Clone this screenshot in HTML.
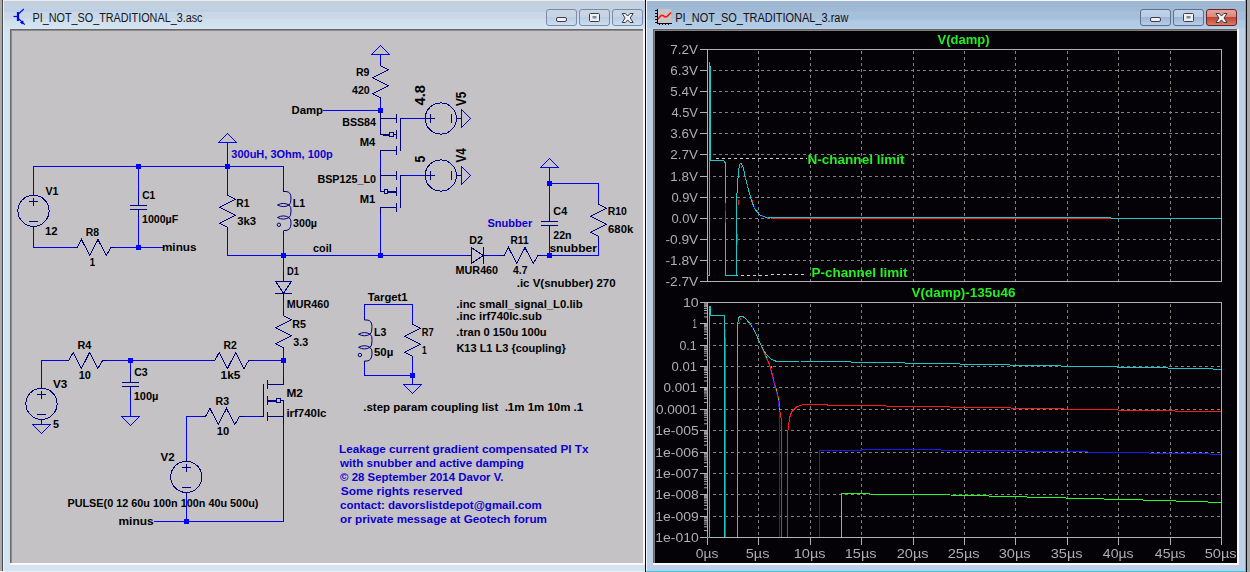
<!DOCTYPE html>
<html><head><meta charset="utf-8">
<style>
html,body{margin:0;padding:0;background:#a9a9a9;width:1250px;height:572px;overflow:hidden}
svg{display:block;position:absolute;left:0;top:0}
.t{font-family:"Liberation Sans",sans-serif}
</style></head><body>
<svg width="1250" height="572" viewBox="0 0 1250 572" shape-rendering="crispEdges">
<defs>
<linearGradient id="tbL" x1="0" y1="0" x2="0" y2="1">
<stop offset="0" stop-color="#c0cfdb"/><stop offset="0.25" stop-color="#c3d2de"/><stop offset="0.3" stop-color="#bcd0ea"/><stop offset="0.38" stop-color="#bcd0ea"/><stop offset="0.4" stop-color="#cad8e6"/><stop offset="0.62" stop-color="#cad8e6"/><stop offset="0.66" stop-color="#cfdeea"/><stop offset="0.88" stop-color="#d2e2ef"/><stop offset="1" stop-color="#d5e5f2"/>
</linearGradient>
<linearGradient id="tbR" x1="0" y1="0" x2="0" y2="1">
<stop offset="0" stop-color="#9db6d2"/><stop offset="0.35" stop-color="#a0b9d5"/><stop offset="0.4" stop-color="#a6c0da"/><stop offset="0.62" stop-color="#a6c0da"/><stop offset="0.66" stop-color="#a9c4e0"/><stop offset="0.72" stop-color="#b2cbe4"/><stop offset="0.92" stop-color="#b2cbe4"/><stop offset="1" stop-color="#bcd3ec"/>
</linearGradient>
<linearGradient id="btnL" x1="0" y1="0" x2="0" y2="1">
<stop offset="0" stop-color="#c9d6e4"/><stop offset="0.45" stop-color="#c6d4e4"/><stop offset="0.5" stop-color="#b8cce4"/><stop offset="1" stop-color="#cddff0"/>
</linearGradient>
<linearGradient id="btnR" x1="0" y1="0" x2="0" y2="1">
<stop offset="0" stop-color="#c0d3e9"/><stop offset="0.45" stop-color="#b9cde5"/><stop offset="0.5" stop-color="#9fb7d4"/><stop offset="1" stop-color="#b8d0ea"/>
</linearGradient>
<linearGradient id="btnX" x1="0" y1="0" x2="0" y2="1">
<stop offset="0" stop-color="#e8a49a"/><stop offset="0.45" stop-color="#d98a7c"/><stop offset="0.5" stop-color="#c34330"/><stop offset="1" stop-color="#d9806a"/>
</linearGradient>
</defs>

<!-- ===== LEFT WINDOW FRAME ===== -->
<g id="leftwin">
<rect x="0" y="0" width="646" height="572" fill="#aaaaaa"/>
<rect x="2" y="0" width="644" height="571" fill="#4a4a4a"/>
<rect x="3" y="0" width="643" height="571" fill="#e9f0f8"/>
<rect x="4" y="1" width="642" height="28" fill="url(#tbL)"/>
<rect x="4" y="29" width="642" height="542" fill="#d3e3f2"/>
<rect x="3" y="0" width="643" height="1" fill="#e8ecef"/>
<rect x="0" y="571" width="646" height="1" fill="#eeeeee"/>
<!-- sunken client -->
<rect x="10" y="29" width="635" height="536" fill="#f8f8f8"/>
<rect x="10" y="29" width="633" height="534" fill="#6a6a6a"/>
<rect x="11" y="30" width="632" height="533" fill="#8a8a8a"/>
<rect x="12" y="31" width="631" height="532" fill="#c4c2c4"/>
</g>

<!-- ===== RIGHT WINDOW FRAME ===== -->
<g id="rightwin">
<rect x="645" y="0" width="602" height="572" fill="#0a0a0a"/>
<rect x="1247" y="0" width="3" height="572" fill="#a9a9a9"/>
<rect x="1245" y="0" width="1" height="572" fill="#35c8e8"/>
<rect x="646" y="0" width="599" height="571" fill="#f4f6f8"/>
<rect x="647" y="1" width="598" height="28" fill="url(#tbR)"/>
<rect x="647" y="29" width="598" height="542" fill="#bcd1e8"/>
<rect x="646" y="571" width="600" height="1" fill="#35c8e8"/>
<rect x="653" y="29" width="586" height="536" fill="#f8f8f8"/>
<rect x="653" y="29" width="584" height="534" fill="#6a6060"/>
<rect x="654" y="30" width="583" height="533" fill="#808080"/>
<rect x="655" y="31" width="582" height="532" fill="#040206"/>
</g>


<!-- ===== TITLE BAR CONTENTS ===== -->
<g id="titles">
<!-- left icon: transistor -->
<g stroke="#0000ff" fill="none" shape-rendering="geometricPrecision">
<line x1="13.5" y1="16.5" x2="17" y2="16.5" stroke-width="1.2"/>
<line x1="18" y1="12" x2="18" y2="21" stroke-width="2.2"/>
<line x1="19" y1="13.5" x2="23.8" y2="9" stroke-width="1.1"/>
<line x1="19" y1="19" x2="24.8" y2="24.6" stroke-width="1.1"/>
<path d="M20.5 22.5 L23 21 L22.5 23.8 Z" fill="#0000ff" stroke-width="1"/>
</g>
<text class="t" x="32.5" y="22" font-size="12" fill="#151520" textLength="170" lengthAdjust="spacingAndGlyphs">PI_NOT_SO_TRADITIONAL_3.asc</text>
<!-- right icon: plot -->
<rect x="657" y="9" width="14" height="14" fill="#c8c4c8"/>
<rect x="657" y="9" width="1" height="15" fill="#000"/>
<rect x="657" y="23" width="15" height="1" fill="#000"/>
<g fill="#000"><rect x="655" y="10" width="2" height="1"/><rect x="655" y="13" width="2" height="1"/><rect x="655" y="16" width="2" height="1"/><rect x="655" y="19" width="2" height="1"/><rect x="655" y="22" width="2" height="1"/>
<rect x="659" y="24" width="1" height="1"/><rect x="662" y="24" width="1" height="1"/><rect x="665" y="24" width="1" height="1"/><rect x="668" y="24" width="1" height="1"/></g>
<polyline points="658,19 661,15.5 663,15.5 665,17 667,16.5 671,12.5" stroke="#ff1010" stroke-width="1.6" fill="none" shape-rendering="geometricPrecision"/>
<text class="t" x="675.3" y="22" font-size="12" fill="#101018" textLength="173" lengthAdjust="spacingAndGlyphs">PI_NOT_SO_TRADITIONAL_3.raw</text>

<!-- left window buttons (inactive) -->
<g shape-rendering="geometricPrecision">
<rect x="546.5" y="9.5" width="30" height="16" rx="2.5" fill="url(#btnL)" stroke="#7e89a8"/>
<rect x="579.5" y="9.5" width="30" height="16" rx="2.5" fill="url(#btnL)" stroke="#7e89a8"/>
<rect x="612.5" y="9.5" width="30" height="16" rx="2.5" fill="url(#btnL)" stroke="#7e89a8"/>
<rect x="556.5" y="17.5" width="10" height="4" rx="1.5" fill="#f0f0f0" stroke="#3c3c4c"/>
<rect x="589.5" y="13.5" width="10" height="8" rx="1" fill="#f0f0f0" stroke="#3c3c4c"/>
<rect x="592.5" y="16" width="4" height="2.5" fill="#7a8aa0" stroke="none"/>
<path d="M622.20 13.50 L625.40 13.50 L627.70 16.05 L630.00 13.50 L633.20 13.50 L630.25 18.00 L633.20 22.50 L630.00 22.50 L627.70 19.95 L625.40 22.50 L622.20 22.50 L625.15 18.00 Z" fill="#f4f4f4" stroke="#383848" stroke-width="1" stroke-linejoin="round"/>
<!-- right window buttons (active) -->
<rect x="1140.5" y="9.5" width="30" height="16" rx="2.5" fill="url(#btnR)" stroke="#5c6f8c"/>
<rect x="1173.5" y="9.5" width="30" height="16" rx="2.5" fill="url(#btnR)" stroke="#5c6f8c"/>
<rect x="1206.5" y="9.5" width="30" height="16" rx="2.5" fill="url(#btnX)" stroke="#6a2228"/>
<rect x="1150.5" y="17.5" width="10" height="4" rx="1.5" fill="#f0f0f0" stroke="#3c3c4c"/>
<rect x="1183.5" y="13.5" width="10" height="8" rx="1" fill="#f0f0f0" stroke="#3c3c4c"/>
<rect x="1186.5" y="16" width="4" height="2.5" fill="#7a8aa0" stroke="none"/>
<path d="M1216.00 13.50 L1219.20 13.50 L1221.50 16.05 L1223.80 13.50 L1227.00 13.50 L1224.05 18.00 L1227.00 22.50 L1223.80 22.50 L1221.50 19.95 L1219.20 22.50 L1216.00 22.50 L1218.95 18.00 Z" fill="#f4f4f4" stroke="#383848" stroke-width="1" stroke-linejoin="round"/>
</g>
</g>

<g id="schematic" shape-rendering="crispEdges">
<polyline points="33.50,192.00 33.50,166.50 283.50,166.50 283.50,188.00" stroke="#0000ff" stroke-width="1" fill="none"/>
<rect x="136.0" y="164.0" width="5" height="5" fill="#0000ff"/>
<rect x="225.0" y="164.0" width="5" height="5" fill="#0000ff"/>
<circle cx="33.5" cy="210.8" r="15.6" stroke="#000080" fill="none" stroke-width="1"/>
<line x1="29.0" y1="201.5" x2="38.0" y2="201.5" stroke="#000080" stroke-width="1"/>
<line x1="33.5" y1="197.70000000000002" x2="33.5" y2="205.70000000000002" stroke="#000080" stroke-width="1"/>
<line x1="29.0" y1="221.5" x2="38.0" y2="221.5" stroke="#000080" stroke-width="1"/>
<line x1="33.5" y1="192" x2="33.5" y2="195.2" stroke="#000080" stroke-width="1"/>
<line x1="33.5" y1="226.4" x2="33.5" y2="230" stroke="#000080" stroke-width="1"/>
<polyline points="33.50,230.00 33.50,247.50 73.00,247.50" stroke="#0000ff" stroke-width="1" fill="none"/>
<line x1="73" y1="247.5" x2="77" y2="247.5" stroke="#000080" stroke-width="1"/>
<polyline points="77.00,247.50 81.50,239.50 89.75,255.50 98.00,239.50 106.25,255.50 111.00,247.50" stroke="#000080" stroke-width="1" fill="none"/>
<line x1="111" y1="247.5" x2="115" y2="247.5" stroke="#000080" stroke-width="1"/>
<polyline points="115.00,247.50 162.50,247.50" stroke="#0000ff" stroke-width="1" fill="none"/>
<rect x="136.0" y="245.0" width="5" height="5" fill="#0000ff"/>
<polyline points="138.50,166.50 138.50,197.00" stroke="#0000ff" stroke-width="1" fill="none"/>
<line x1="138.5" y1="197" x2="138.5" y2="205.5" stroke="#000080" stroke-width="1"/>
<line x1="130.0" y1="205.5" x2="147.0" y2="205.5" stroke="#000080" stroke-width="1"/>
<line x1="130.0" y1="209.5" x2="147.0" y2="209.5" stroke="#000080" stroke-width="1"/>
<line x1="138.5" y1="209.5" x2="138.5" y2="217" stroke="#000080" stroke-width="1"/>
<polyline points="138.50,217.00 138.50,247.50" stroke="#0000ff" stroke-width="1" fill="none"/>
<polygon points="218.50,142.50 236.50,142.50 227.50,133.50" stroke="#0000ff" stroke-width="1" fill="none"/>
<polyline points="227.50,142.50 227.50,166.50" stroke="#0000ff" stroke-width="1" fill="none"/>
<polyline points="227.50,166.50 227.50,191.50" stroke="#0000ff" stroke-width="1" fill="none"/>
<line x1="227.5" y1="191.5" x2="227.5" y2="195.2" stroke="#000080" stroke-width="1"/>
<polyline points="227.50,195.20 235.50,199.20 219.50,207.20 235.50,215.20 219.50,223.20 227.50,227.20" stroke="#000080" stroke-width="1" fill="none"/>
<line x1="227.5" y1="227.2" x2="227.5" y2="230.5" stroke="#000080" stroke-width="1"/>
<polyline points="227.50,230.50 227.50,255.50 380.50,255.50" stroke="#0000ff" stroke-width="1" fill="none"/>
<line x1="283.5" y1="188" x2="283.5" y2="191.5" stroke="#000080" stroke-width="1"/>
<path d="M283.5 191.5 H286.0 Q291.0 191.8 291.0 198.0 Q291.0 204.0 289.0 205.0 Q291.5 206.5 291.0 211.0 Q291.0 216.5 289.0 217.5 Q291.5 219.0 291.0 224.0 Q290.5 230.2 286.0 230.5 H283.5" stroke="#000080" fill="none" stroke-width="1" shape-rendering="geometricPrecision"/>
<path d="M289.0 205.0 Q283.5 201.8 277.5 205.0 Q283.5 208.2 289.0 205.0" stroke="#000080" fill="none" stroke-width="1" shape-rendering="geometricPrecision"/>
<path d="M289.0 217.5 Q283.5 214.3 277.5 217.5 Q283.5 220.7 289.0 217.5" stroke="#000080" fill="none" stroke-width="1" shape-rendering="geometricPrecision"/>
<circle cx="278.9" cy="224.8" r="1.7" stroke="#000080" fill="none" stroke-width="1" shape-rendering="geometricPrecision"/>
<line x1="283.5" y1="230.5" x2="283.5" y2="234" stroke="#000080" stroke-width="1"/>
<polyline points="283.50,234.00 283.50,255.50" stroke="#0000ff" stroke-width="1" fill="none"/>
<rect x="281.0" y="253.0" width="5" height="5" fill="#0000ff"/>
<polyline points="283.50,255.50 467.00,255.50" stroke="#0000ff" stroke-width="1" fill="none"/>
<line x1="467" y1="255.5" x2="471.5" y2="255.5" stroke="#000080" stroke-width="1"/>
<rect x="378.0" y="253.0" width="5" height="5" fill="#0000ff"/>
<polygon points="371.50,54.50 389.50,54.50 380.50,45.50" stroke="#0000ff" stroke-width="1" fill="none"/>
<polyline points="380.50,54.50 380.50,61.50" stroke="#0000ff" stroke-width="1" fill="none"/>
<line x1="380.5" y1="61.5" x2="380.5" y2="65.6" stroke="#000080" stroke-width="1"/>
<polyline points="380.50,65.60 388.50,69.60 372.50,77.60 388.50,85.60 372.50,93.60 380.50,97.60" stroke="#000080" stroke-width="1" fill="none"/>
<line x1="380.5" y1="97.6" x2="380.5" y2="101" stroke="#000080" stroke-width="1"/>
<polyline points="380.50,101.00 380.50,110.50" stroke="#0000ff" stroke-width="1" fill="none"/>
<polyline points="322.50,110.50 380.50,110.50" stroke="#0000ff" stroke-width="1" fill="none"/>
<rect x="378.0" y="108.0" width="5" height="5" fill="#0000ff"/>
<polyline points="380.50,112.00 380.50,118.50 396.50,118.50" stroke="#000080" stroke-width="1" fill="none"/>
<line x1="396.5" y1="114" x2="396.5" y2="123" stroke="#000080" stroke-width="1"/>
<line x1="396.5" y1="130" x2="396.5" y2="139" stroke="#000080" stroke-width="1"/>
<line x1="396.5" y1="146" x2="396.5" y2="155" stroke="#000080" stroke-width="1"/>
<polyline points="396.50,150.50 380.50,150.50 380.50,157.00" stroke="#000080" stroke-width="1" fill="none"/>
<polyline points="380.50,118.50 380.50,134.50 383.50,134.50" stroke="#000080" stroke-width="1" fill="none"/>
<path d="M383.5 134 H389.5 V132 H393 V136.5 H389.5 V135 H383.5 Z" stroke="#000080" fill="none"/>
<line x1="393" y1="134.5" x2="396.5" y2="134.5" stroke="#000080" stroke-width="1"/>
<polyline points="400.50,150.50 400.50,118.50 404.00,118.50" stroke="#000080" stroke-width="1" fill="none"/>
<polyline points="380.50,169.00 380.50,175.50 396.50,175.50" stroke="#000080" stroke-width="1" fill="none"/>
<line x1="396.5" y1="171" x2="396.5" y2="180" stroke="#000080" stroke-width="1"/>
<line x1="396.5" y1="187" x2="396.5" y2="196" stroke="#000080" stroke-width="1"/>
<line x1="396.5" y1="203" x2="396.5" y2="212" stroke="#000080" stroke-width="1"/>
<polyline points="396.50,207.50 380.50,207.50 380.50,214.00" stroke="#000080" stroke-width="1" fill="none"/>
<polyline points="380.50,175.50 380.50,191.50 383.50,191.50" stroke="#000080" stroke-width="1" fill="none"/>
<path d="M387.5 189 H384 V193.5 H387.5 V192 H396 V191 H387.5 Z" stroke="#000080" fill="none"/>
<polyline points="400.50,207.50 400.50,175.50 404.00,175.50" stroke="#000080" stroke-width="1" fill="none"/>
<polyline points="380.50,157.00 380.50,169.00" stroke="#0000ff" stroke-width="1" fill="none"/>
<polyline points="380.50,214.00 380.50,255.50" stroke="#0000ff" stroke-width="1" fill="none"/>
<polyline points="404.00,118.50 424.90,118.50" stroke="#0000ff" stroke-width="1" fill="none"/>
<circle cx="440.8" cy="118.5" r="15.6" stroke="#000080" fill="none" stroke-width="1"/>
<line x1="426.3" y1="118.5" x2="435.3" y2="118.5" stroke="#000080" stroke-width="1"/>
<line x1="430.5" y1="114.0" x2="430.5" y2="123.0" stroke="#000080" stroke-width="1"/>
<line x1="451.5" y1="114.0" x2="451.5" y2="123.0" stroke="#000080" stroke-width="1"/>
<line x1="456.1" y1="118.5" x2="461.5" y2="118.5" stroke="#000080" stroke-width="1"/>
<polygon points="461.50,109.50 461.50,127.50 470.50,118.50" stroke="#0000ff" stroke-width="1" fill="none"/>
<polyline points="404.00,175.50 424.90,175.50" stroke="#0000ff" stroke-width="1" fill="none"/>
<circle cx="440.8" cy="175.5" r="15.6" stroke="#000080" fill="none" stroke-width="1"/>
<line x1="426.3" y1="175.5" x2="435.3" y2="175.5" stroke="#000080" stroke-width="1"/>
<line x1="430.5" y1="171.0" x2="430.5" y2="180.0" stroke="#000080" stroke-width="1"/>
<line x1="451.5" y1="171.0" x2="451.5" y2="180.0" stroke="#000080" stroke-width="1"/>
<line x1="456.1" y1="175.5" x2="461.5" y2="175.5" stroke="#000080" stroke-width="1"/>
<polygon points="461.50,166.50 461.50,184.50 470.50,175.50" stroke="#0000ff" stroke-width="1" fill="none"/>
<polygon points="471.30,247.50 471.30,263.50 483.30,255.50" stroke="#000080" stroke-width="1" fill="none"/>
<line x1="483.5" y1="247.0" x2="483.5" y2="264.0" stroke="#000080" stroke-width="1"/>
<line x1="483.3" y1="255.5" x2="487" y2="255.5" stroke="#000080" stroke-width="1"/>
<polyline points="487.00,255.50 500.00,255.50" stroke="#0000ff" stroke-width="1" fill="none"/>
<line x1="500" y1="255.5" x2="504" y2="255.5" stroke="#000080" stroke-width="1"/>
<polyline points="504.00,255.50 508.50,247.50 516.75,263.50 525.00,247.50 533.25,263.50 538.00,255.50" stroke="#000080" stroke-width="1" fill="none"/>
<line x1="538" y1="255.5" x2="542" y2="255.5" stroke="#000080" stroke-width="1"/>
<polyline points="542.00,255.50 598.50,255.50" stroke="#0000ff" stroke-width="1" fill="none"/>
<rect x="547.0" y="253.0" width="5" height="5" fill="#0000ff"/>
<polygon points="540.50,167.50 558.50,167.50 549.50,158.50" stroke="#0000ff" stroke-width="1" fill="none"/>
<polyline points="549.50,167.50 549.50,183.50 598.50,183.50 598.50,200.00" stroke="#0000ff" stroke-width="1" fill="none"/>
<rect x="547.0" y="181.0" width="5" height="5" fill="#0000ff"/>
<polyline points="549.50,183.50 549.50,213.00" stroke="#0000ff" stroke-width="1" fill="none"/>
<line x1="549.5" y1="213" x2="549.5" y2="221" stroke="#000080" stroke-width="1"/>
<line x1="541.0" y1="221.5" x2="558.0" y2="221.5" stroke="#000080" stroke-width="1"/>
<line x1="541.0" y1="225.5" x2="558.0" y2="225.5" stroke="#000080" stroke-width="1"/>
<line x1="549.5" y1="225" x2="549.5" y2="233" stroke="#000080" stroke-width="1"/>
<polyline points="549.50,233.00 549.50,255.50" stroke="#0000ff" stroke-width="1" fill="none"/>
<line x1="598.5" y1="200" x2="598.5" y2="204.3" stroke="#000080" stroke-width="1"/>
<polyline points="598.50,204.30 606.50,208.30 590.50,216.30 606.50,224.30 590.50,232.30 598.50,236.30" stroke="#000080" stroke-width="1" fill="none"/>
<line x1="598.5" y1="236.3" x2="598.5" y2="240" stroke="#000080" stroke-width="1"/>
<polyline points="598.50,240.00 598.50,255.50" stroke="#0000ff" stroke-width="1" fill="none"/>
<polyline points="283.50,255.50 283.50,272.00" stroke="#0000ff" stroke-width="1" fill="none"/>
<line x1="283.5" y1="272" x2="283.5" y2="281.2" stroke="#000080" stroke-width="1"/>
<polygon points="275.50,281.20 291.50,281.20 283.50,293.20" stroke="#000080" stroke-width="1" fill="none"/>
<line x1="275.0" y1="293.5" x2="292.0" y2="293.5" stroke="#000080" stroke-width="1"/>
<line x1="283.5" y1="293.2" x2="283.5" y2="301" stroke="#000080" stroke-width="1"/>
<polyline points="283.50,301.00 283.50,312.00" stroke="#0000ff" stroke-width="1" fill="none"/>
<line x1="283.5" y1="312" x2="283.5" y2="315.9" stroke="#000080" stroke-width="1"/>
<polyline points="283.50,315.90 291.50,319.90 275.50,327.90 291.50,335.90 275.50,343.90 283.50,347.90" stroke="#000080" stroke-width="1" fill="none"/>
<line x1="283.5" y1="347.9" x2="283.5" y2="351" stroke="#000080" stroke-width="1"/>
<polyline points="283.50,351.00 283.50,377.00" stroke="#0000ff" stroke-width="1" fill="none"/>
<rect x="281.0" y="358.0" width="5" height="5" fill="#0000ff"/>
<polyline points="283.50,377.00 283.50,384.50 267.50,384.50" stroke="#000080" stroke-width="1" fill="none"/>
<line x1="267.5" y1="380" x2="267.5" y2="389" stroke="#000080" stroke-width="1"/>
<line x1="267.5" y1="396" x2="267.5" y2="405" stroke="#000080" stroke-width="1"/>
<line x1="267.5" y1="412" x2="267.5" y2="421" stroke="#000080" stroke-width="1"/>
<polyline points="267.50,416.50 283.50,416.50 283.50,424.00" stroke="#000080" stroke-width="1" fill="none"/>
<path d="M268 400 H276.5 V398.5 H280.5 V402.5 H276.5 V401 H268 Z" stroke="#000080" fill="none"/>
<polyline points="280.50,400.50 283.50,400.50 283.50,416.50" stroke="#000080" stroke-width="1" fill="none"/>
<polyline points="260.00,416.50 263.50,416.50 263.50,384.00" stroke="#000080" stroke-width="1" fill="none"/>
<polyline points="243.50,416.50 260.00,416.50" stroke="#0000ff" stroke-width="1" fill="none"/>
<polyline points="283.50,424.00 283.50,521.50 154.00,521.50" stroke="#0000ff" stroke-width="1" fill="none"/>
<rect x="184.0" y="519.0" width="5" height="5" fill="#0000ff"/>
<polyline points="41.50,384.00 41.50,360.50 64.50,360.50" stroke="#0000ff" stroke-width="1" fill="none"/>
<line x1="64.5" y1="360.5" x2="68.6" y2="360.5" stroke="#000080" stroke-width="1"/>
<polyline points="68.60,360.50 73.10,352.50 81.35,368.50 89.60,352.50 97.85,368.50 102.60,360.50" stroke="#000080" stroke-width="1" fill="none"/>
<line x1="102.6" y1="360.5" x2="106.5" y2="360.5" stroke="#000080" stroke-width="1"/>
<polyline points="106.50,360.50 210.50,360.50" stroke="#0000ff" stroke-width="1" fill="none"/>
<line x1="210.5" y1="360.5" x2="214.7" y2="360.5" stroke="#000080" stroke-width="1"/>
<polyline points="214.70,360.50 219.20,352.50 227.45,368.50 235.70,352.50 243.95,368.50 248.70,360.50" stroke="#000080" stroke-width="1" fill="none"/>
<line x1="248.7" y1="360.5" x2="252.5" y2="360.5" stroke="#000080" stroke-width="1"/>
<polyline points="252.50,360.50 283.50,360.50" stroke="#0000ff" stroke-width="1" fill="none"/>
<rect x="128.0" y="358.0" width="5" height="5" fill="#0000ff"/>
<polyline points="130.50,360.50 130.50,374.00" stroke="#0000ff" stroke-width="1" fill="none"/>
<line x1="130.5" y1="374" x2="130.5" y2="382.7" stroke="#000080" stroke-width="1"/>
<line x1="122.0" y1="382.5" x2="139.0" y2="382.5" stroke="#000080" stroke-width="1"/>
<line x1="122.0" y1="386.5" x2="139.0" y2="386.5" stroke="#000080" stroke-width="1"/>
<line x1="130.5" y1="386.5" x2="130.5" y2="394" stroke="#000080" stroke-width="1"/>
<polyline points="130.50,394.00 130.50,416.30" stroke="#0000ff" stroke-width="1" fill="none"/>
<polygon points="121.50,416.30 139.50,416.30 130.50,425.30" stroke="#0000ff" stroke-width="1" fill="none"/>
<line x1="41.5" y1="384" x2="41.5" y2="388.2" stroke="#000080" stroke-width="1"/>
<circle cx="41.5" cy="403.8" r="15.6" stroke="#000080" fill="none" stroke-width="1"/>
<line x1="37.0" y1="394.5" x2="46.0" y2="394.5" stroke="#000080" stroke-width="1"/>
<line x1="41.5" y1="390.7" x2="41.5" y2="398.7" stroke="#000080" stroke-width="1"/>
<line x1="37.0" y1="414.5" x2="46.0" y2="414.5" stroke="#000080" stroke-width="1"/>
<line x1="41.5" y1="419.4" x2="41.5" y2="423" stroke="#000080" stroke-width="1"/>
<polyline points="41.50,423.00 41.50,424.60" stroke="#0000ff" stroke-width="1" fill="none"/>
<polygon points="32.50,424.60 50.50,424.60 41.50,433.60" stroke="#0000ff" stroke-width="1" fill="none"/>
<polyline points="186.50,458.00 186.50,416.50 201.50,416.50" stroke="#0000ff" stroke-width="1" fill="none"/>
<line x1="201.5" y1="416.5" x2="205.5" y2="416.5" stroke="#000080" stroke-width="1"/>
<polyline points="205.50,416.50 210.00,408.50 218.25,424.50 226.50,408.50 234.75,424.50 239.50,416.50" stroke="#000080" stroke-width="1" fill="none"/>
<line x1="239.5" y1="416.5" x2="243.5" y2="416.5" stroke="#000080" stroke-width="1"/>
<line x1="186.5" y1="458" x2="186.5" y2="461.3" stroke="#000080" stroke-width="1"/>
<circle cx="186.3" cy="476.9" r="15.6" stroke="#000080" fill="none" stroke-width="1"/>
<line x1="181.8" y1="467.5" x2="190.8" y2="467.5" stroke="#000080" stroke-width="1"/>
<line x1="186.5" y1="463.79999999999995" x2="186.5" y2="471.79999999999995" stroke="#000080" stroke-width="1"/>
<line x1="181.8" y1="487.5" x2="190.8" y2="487.5" stroke="#000080" stroke-width="1"/>
<line x1="186.5" y1="492.5" x2="186.5" y2="496" stroke="#000080" stroke-width="1"/>
<polyline points="186.50,496.00 186.50,521.50" stroke="#0000ff" stroke-width="1" fill="none"/>
<polyline points="364.50,316.00 364.50,304.50 412.50,304.50 412.50,320.50" stroke="#0000ff" stroke-width="1" fill="none"/>
<line x1="364.5" y1="316" x2="364.5" y2="320" stroke="#000080" stroke-width="1"/>
<path d="M364.5 320.0 H367.0 Q372.0 320.31538461538463 372.0 326.8333333333333 Q372.0 333.14102564102564 370.0 334.1923076923077 Q372.5 335.7692307692308 372.0 340.5 Q372.0 346.28205128205127 370.0 347.3333333333333 Q372.5 348.9102564102564 372.0 354.1666666666667 Q371.5 360.68461538461537 367.0 361.0 H364.5" stroke="#000080" fill="none" stroke-width="1" shape-rendering="geometricPrecision"/>
<path d="M370.0 334.1923076923077 Q364.5 330.9923076923077 358.5 334.1923076923077 Q364.5 337.39230769230767 370.0 334.1923076923077" stroke="#000080" fill="none" stroke-width="1" shape-rendering="geometricPrecision"/>
<path d="M370.0 347.3333333333333 Q364.5 344.1333333333333 358.5 347.3333333333333 Q364.5 350.5333333333333 370.0 347.3333333333333" stroke="#000080" fill="none" stroke-width="1" shape-rendering="geometricPrecision"/>
<circle cx="359.9" cy="355.0076923076923" r="1.7" stroke="#000080" fill="none" stroke-width="1" shape-rendering="geometricPrecision"/>
<line x1="364.5" y1="361" x2="364.5" y2="365" stroke="#000080" stroke-width="1"/>
<polyline points="364.50,365.00 364.50,375.50 412.50,375.50 412.50,384.60" stroke="#0000ff" stroke-width="1" fill="none"/>
<line x1="412.5" y1="320.5" x2="412.5" y2="324.4" stroke="#000080" stroke-width="1"/>
<polyline points="412.50,324.40 420.50,328.40 404.50,336.40 420.50,344.40 404.50,352.40 412.50,356.40" stroke="#000080" stroke-width="1" fill="none"/>
<line x1="412.5" y1="356.4" x2="412.5" y2="360" stroke="#000080" stroke-width="1"/>
<polyline points="412.50,360.00 412.50,375.50" stroke="#0000ff" stroke-width="1" fill="none"/>
<rect x="410.0" y="373.0" width="5" height="5" fill="#0000ff"/>
<polygon points="403.50,384.60 421.50,384.60 412.50,393.60" stroke="#0000ff" stroke-width="1" fill="none"/>
<text class="t" x="355.94" y="76" font-size="11" font-weight="bold" fill="#000" xml:space="preserve" textLength="13.52" lengthAdjust="spacingAndGlyphs">R9</text>
<text class="t" x="352.10" y="94" font-size="11" font-weight="bold" fill="#000" xml:space="preserve" textLength="17.65" lengthAdjust="spacingAndGlyphs">420</text>
<text class="t" x="291.47" y="114" font-size="11" font-weight="bold" fill="#000" xml:space="preserve" textLength="31.41" lengthAdjust="spacingAndGlyphs">Damp</text>
<text class="t" x="342.23" y="126" font-size="11" font-weight="bold" fill="#000" xml:space="preserve" textLength="33.73" lengthAdjust="spacingAndGlyphs">BSS84</text>
<text class="t" x="359.67" y="146" font-size="11" font-weight="bold" fill="#000" xml:space="preserve" textLength="15.69" lengthAdjust="spacingAndGlyphs">M4</text>
<text class="t" x="317.42" y="183" font-size="11" font-weight="bold" fill="#000" xml:space="preserve" textLength="58.62" lengthAdjust="spacingAndGlyphs">BSP125_L0</text>
<text class="t" x="359.68" y="203" font-size="11" font-weight="bold" fill="#000" xml:space="preserve" textLength="15.61" lengthAdjust="spacingAndGlyphs">M1</text>
<text class="t" x="45.50" y="195" font-size="11" font-weight="bold" fill="#000" xml:space="preserve" textLength="13.05" lengthAdjust="spacingAndGlyphs">V1</text>
<text class="t" x="44.97" y="235" font-size="11" font-weight="bold" fill="#000" xml:space="preserve" textLength="12.58" lengthAdjust="spacingAndGlyphs">12</text>
<text class="t" x="85.75" y="236" font-size="11" font-weight="bold" fill="#000" xml:space="preserve" textLength="13.31" lengthAdjust="spacingAndGlyphs">R8</text>
<text class="t" x="89.84" y="266" font-size="11" font-weight="bold" fill="#000" xml:space="preserve" textLength="5.27" lengthAdjust="spacingAndGlyphs">1</text>
<text class="t" x="142.30" y="199" font-size="11" font-weight="bold" fill="#000" xml:space="preserve" textLength="12.96" lengthAdjust="spacingAndGlyphs">C1</text>
<text class="t" x="142.04" y="223" font-size="11" font-weight="bold" fill="#000" xml:space="preserve" textLength="36.18" lengthAdjust="spacingAndGlyphs">1000µF</text>
<text class="t" x="161.93" y="251" font-size="11" font-weight="bold" fill="#000" xml:space="preserve" textLength="34.60" lengthAdjust="spacingAndGlyphs">minus</text>
<text class="t" x="236.37" y="207" font-size="11" font-weight="bold" fill="#000" xml:space="preserve" textLength="13.09" lengthAdjust="spacingAndGlyphs">R1</text>
<text class="t" x="237.20" y="225" font-size="11" font-weight="bold" fill="#000" xml:space="preserve" textLength="18.87" lengthAdjust="spacingAndGlyphs">3k3</text>
<text class="t" x="292.74" y="207" font-size="11" font-weight="bold" fill="#000" xml:space="preserve" textLength="12.31" lengthAdjust="spacingAndGlyphs">L1</text>
<text class="t" x="293.00" y="227" font-size="11" font-weight="bold" fill="#000" xml:space="preserve" textLength="23.98" lengthAdjust="spacingAndGlyphs">300µ</text>
<text class="t" x="313.10" y="252" font-size="11" font-weight="bold" fill="#000" xml:space="preserve" textLength="18.55" lengthAdjust="spacingAndGlyphs">coil</text>
<text class="t" x="286.95" y="275" font-size="11" font-weight="bold" fill="#000" xml:space="preserve" textLength="11.90" lengthAdjust="spacingAndGlyphs">D1</text>
<text class="t" x="553.30" y="215" font-size="11" font-weight="bold" fill="#000" xml:space="preserve" textLength="13.86" lengthAdjust="spacingAndGlyphs">C4</text>
<text class="t" x="553.30" y="239" font-size="11" font-weight="bold" fill="#000" xml:space="preserve" textLength="18.27" lengthAdjust="spacingAndGlyphs">22n</text>
<text class="t" x="549.40" y="252" font-size="11" font-weight="bold" fill="#000" xml:space="preserve" textLength="47.54" lengthAdjust="spacingAndGlyphs">snubber</text>
<text class="t" x="607.65" y="215" font-size="11" font-weight="bold" fill="#000" xml:space="preserve" textLength="19.12" lengthAdjust="spacingAndGlyphs">R10</text>
<text class="t" x="608.10" y="233" font-size="11" font-weight="bold" fill="#000" xml:space="preserve" textLength="25.10" lengthAdjust="spacingAndGlyphs">680k</text>
<text class="t" x="469.33" y="244" font-size="11" font-weight="bold" fill="#000" xml:space="preserve" textLength="13.63" lengthAdjust="spacingAndGlyphs">D2</text>
<text class="t" x="510.58" y="244" font-size="11" font-weight="bold" fill="#000" xml:space="preserve" textLength="17.93" lengthAdjust="spacingAndGlyphs">R11</text>
<text class="t" x="455.62" y="274" font-size="11" font-weight="bold" fill="#000" xml:space="preserve" textLength="42.48" lengthAdjust="spacingAndGlyphs">MUR460</text>
<text class="t" x="513.10" y="274" font-size="11" font-weight="bold" fill="#000" xml:space="preserve" textLength="14.38" lengthAdjust="spacingAndGlyphs">4.7</text>
<text class="t" x="516.76" y="287" font-size="11" font-weight="bold" fill="#000" xml:space="preserve" textLength="98.80" lengthAdjust="spacingAndGlyphs">.ic V(snubber) 270</text>
<text class="t" x="286.83" y="307.5" font-size="11" font-weight="bold" fill="#000" xml:space="preserve" textLength="42.27" lengthAdjust="spacingAndGlyphs">MUR460</text>
<text class="t" x="292.33" y="328" font-size="11" font-weight="bold" fill="#000" xml:space="preserve" textLength="13.63" lengthAdjust="spacingAndGlyphs">R5</text>
<text class="t" x="293.30" y="346" font-size="11" font-weight="bold" fill="#000" xml:space="preserve" textLength="14.79" lengthAdjust="spacingAndGlyphs">3.3</text>
<text class="t" x="77.42" y="349" font-size="11" font-weight="bold" fill="#000" xml:space="preserve" textLength="13.85" lengthAdjust="spacingAndGlyphs">R4</text>
<text class="t" x="78.70" y="379" font-size="11" font-weight="bold" fill="#000" xml:space="preserve">10</text>
<text class="t" x="134.20" y="376" font-size="11" font-weight="bold" fill="#000" xml:space="preserve" textLength="13.46" lengthAdjust="spacingAndGlyphs">C3</text>
<text class="t" x="133.70" y="400" font-size="11" font-weight="bold" fill="#000" xml:space="preserve">100µ</text>
<text class="t" x="53.00" y="388" font-size="11" font-weight="bold" fill="#000" xml:space="preserve" textLength="14.30" lengthAdjust="spacingAndGlyphs">V3</text>
<text class="t" x="53.00" y="428" font-size="11" font-weight="bold" fill="#000" xml:space="preserve" textLength="6.02" lengthAdjust="spacingAndGlyphs">5</text>
<text class="t" x="223.45" y="349" font-size="11" font-weight="bold" fill="#000" xml:space="preserve" textLength="13.31" lengthAdjust="spacingAndGlyphs">R2</text>
<text class="t" x="220.62" y="379" font-size="11" font-weight="bold" fill="#000" xml:space="preserve" textLength="19.76" lengthAdjust="spacingAndGlyphs">1k5</text>
<text class="t" x="286.42" y="397" font-size="11" font-weight="bold" fill="#000" xml:space="preserve" textLength="16.48" lengthAdjust="spacingAndGlyphs">M2</text>
<text class="t" x="286.46" y="417" font-size="11" font-weight="bold" fill="#000" xml:space="preserve" textLength="39.99" lengthAdjust="spacingAndGlyphs">irf740lc</text>
<text class="t" x="215.54" y="405" font-size="11" font-weight="bold" fill="#000" xml:space="preserve" textLength="13.52" lengthAdjust="spacingAndGlyphs">R3</text>
<text class="t" x="216.78" y="435" font-size="11" font-weight="bold" fill="#000" xml:space="preserve" textLength="12.47" lengthAdjust="spacingAndGlyphs">10</text>
<text class="t" x="160.50" y="461" font-size="11" font-weight="bold" fill="#000" xml:space="preserve" textLength="14.19" lengthAdjust="spacingAndGlyphs">V2</text>
<text class="t" x="67.41" y="507" font-size="11" font-weight="bold" fill="#000" xml:space="preserve" textLength="191.02" lengthAdjust="spacingAndGlyphs">PULSE(0 12 60u 100n 100n 40u 500u)</text>
<text class="t" x="118.52" y="525" font-size="11" font-weight="bold" fill="#000" xml:space="preserve" textLength="35.12" lengthAdjust="spacingAndGlyphs">minus</text>
<text class="t" x="367.70" y="301" font-size="11" font-weight="bold" fill="#000" xml:space="preserve" textLength="39.92" lengthAdjust="spacingAndGlyphs">Target1</text>
<text class="t" x="374.04" y="336" font-size="11" font-weight="bold" fill="#000" xml:space="preserve" textLength="12.31" lengthAdjust="spacingAndGlyphs">L3</text>
<text class="t" x="374.00" y="356" font-size="11" font-weight="bold" fill="#000" xml:space="preserve" textLength="19.30" lengthAdjust="spacingAndGlyphs">50µ</text>
<text class="t" x="421.85" y="336" font-size="11" font-weight="bold" fill="#000" xml:space="preserve" textLength="11.90" lengthAdjust="spacingAndGlyphs">R7</text>
<text class="t" x="421.94" y="354" font-size="11" font-weight="bold" fill="#000" xml:space="preserve" textLength="4.66" lengthAdjust="spacingAndGlyphs">1</text>
<text class="t" x="456.37" y="307.5" font-size="11" font-weight="bold" fill="#000" xml:space="preserve" textLength="126.21" lengthAdjust="spacingAndGlyphs">.inc small_signal_L0.lib</text>
<text class="t" x="456.37" y="320" font-size="11" font-weight="bold" fill="#000" xml:space="preserve" textLength="85.59" lengthAdjust="spacingAndGlyphs">.inc irf740lc.sub</text>
<text class="t" x="456.39" y="336" font-size="11" font-weight="bold" fill="#000" xml:space="preserve" textLength="90.30" lengthAdjust="spacingAndGlyphs">.tran 0 150u 100u</text>
<text class="t" x="456.40" y="352" font-size="11" font-weight="bold" fill="#000" xml:space="preserve">K13 L1 L3 {coupling}</text>
<text class="t" x="363.26" y="411" font-size="11" font-weight="bold" fill="#000" xml:space="preserve" textLength="219.84" lengthAdjust="spacingAndGlyphs">.step param coupling list  .1m 1m 10m .1</text>
<text class="t" x="231.30" y="158" font-size="11" font-weight="bold" fill="#0c00d0" xml:space="preserve">300uH, 3Ohm, 100p</text>
<text class="t" x="487.40" y="227" font-size="11" font-weight="bold" fill="#0c00d0" xml:space="preserve" textLength="44.92" lengthAdjust="spacingAndGlyphs">Snubber</text>
<text class="t" x="339.08" y="453" font-size="11.5" font-weight="bold" fill="#0c00d0" xml:space="preserve" textLength="249.34" lengthAdjust="spacingAndGlyphs">Leakage current gradient compensated PI Tx</text>
<text class="t" x="340.10" y="467" font-size="11.5" font-weight="bold" fill="#0c00d0" xml:space="preserve" textLength="183.72" lengthAdjust="spacingAndGlyphs">with snubber and active damping</text>
<text class="t" x="340.10" y="481" font-size="11.5" font-weight="bold" fill="#0c00d0" xml:space="preserve" textLength="163.37" lengthAdjust="spacingAndGlyphs">© 28 September 2014 Davor V.</text>
<text class="t" x="340.80" y="495" font-size="11.5" font-weight="bold" fill="#0c00d0" xml:space="preserve" textLength="121.83" lengthAdjust="spacingAndGlyphs">Some rights reserved</text>
<text class="t" x="340.10" y="509" font-size="11.5" font-weight="bold" fill="#0c00d0" xml:space="preserve">contact: davorslistdepot@gmail.com</text>
<text class="t" x="340.10" y="523" font-size="11.5" font-weight="bold" fill="#0c00d0" xml:space="preserve" textLength="206.84" lengthAdjust="spacingAndGlyphs">or private message at Geotech forum</text>
<text class="t" transform="translate(424.5,105.6) rotate(-90) scale(1,1.3)" x="0" y="0" font-size="11" font-weight="bold" fill="#000" textLength="20.6" lengthAdjust="spacingAndGlyphs">4.8</text>
<text class="t" transform="translate(465.5,106) rotate(-90) scale(1,1.3)" x="0" y="0" font-size="11" font-weight="bold" fill="#000" textLength="14.2" lengthAdjust="spacingAndGlyphs">V5</text>
<text class="t" transform="translate(424.5,162.6) rotate(-90) scale(1,1.3)" x="0" y="0" font-size="11" font-weight="bold" fill="#000" textLength="6.8" lengthAdjust="spacingAndGlyphs">5</text>
<text class="t" transform="translate(465.5,162.4) rotate(-90) scale(1,1.3)" x="0" y="0" font-size="11" font-weight="bold" fill="#000" textLength="14.2" lengthAdjust="spacingAndGlyphs">V4</text>
</g>
<filter id="nolcd"><feOffset dx="0" dy="0"/></filter><g id="plots" filter="url(#nolcd)">
<g shape-rendering="crispEdges"><line x1="713" y1="70.5" x2="1221" y2="70.5" stroke="#80837a" stroke-width="1" stroke-dasharray="3 3"/><line x1="713" y1="91.5" x2="1221" y2="91.5" stroke="#80837a" stroke-width="1" stroke-dasharray="3 3"/><line x1="713" y1="112.5" x2="1221" y2="112.5" stroke="#80837a" stroke-width="1" stroke-dasharray="3 3"/><line x1="713" y1="133.5" x2="1221" y2="133.5" stroke="#80837a" stroke-width="1" stroke-dasharray="3 3"/><line x1="713" y1="154.5" x2="1221" y2="154.5" stroke="#80837a" stroke-width="1" stroke-dasharray="3 3"/><line x1="713" y1="176.5" x2="1221" y2="176.5" stroke="#80837a" stroke-width="1" stroke-dasharray="3 3"/><line x1="713" y1="197.5" x2="1221" y2="197.5" stroke="#80837a" stroke-width="1" stroke-dasharray="3 3"/><line x1="713" y1="218.5" x2="1221" y2="218.5" stroke="#80837a" stroke-width="1" stroke-dasharray="3 3"/><line x1="713" y1="239.5" x2="1221" y2="239.5" stroke="#80837a" stroke-width="1" stroke-dasharray="3 3"/><line x1="713" y1="260.5" x2="1221" y2="260.5" stroke="#80837a" stroke-width="1" stroke-dasharray="3 3"/><line x1="758.5" y1="51" x2="758.5" y2="281" stroke="#80837a" stroke-width="1" stroke-dasharray="3 3"/><line x1="810.5" y1="51" x2="810.5" y2="281" stroke="#80837a" stroke-width="1" stroke-dasharray="3 3"/><line x1="861.5" y1="51" x2="861.5" y2="281" stroke="#80837a" stroke-width="1" stroke-dasharray="3 3"/><line x1="913.5" y1="51" x2="913.5" y2="281" stroke="#80837a" stroke-width="1" stroke-dasharray="3 3"/><line x1="964.5" y1="51" x2="964.5" y2="281" stroke="#80837a" stroke-width="1" stroke-dasharray="3 3"/><line x1="1015.5" y1="51" x2="1015.5" y2="281" stroke="#80837a" stroke-width="1" stroke-dasharray="3 3"/><line x1="1067.5" y1="51" x2="1067.5" y2="281" stroke="#80837a" stroke-width="1" stroke-dasharray="3 3"/><line x1="1118.5" y1="51" x2="1118.5" y2="281" stroke="#80837a" stroke-width="1" stroke-dasharray="3 3"/><line x1="1170.5" y1="51" x2="1170.5" y2="281" stroke="#80837a" stroke-width="1" stroke-dasharray="3 3"/><line x1="700" y1="49.5" x2="1222" y2="49.5" stroke="#b0b0b0" stroke-width="1"/><line x1="700" y1="281.5" x2="1222" y2="281.5" stroke="#b0b0b0" stroke-width="1"/><line x1="707.5" y1="49" x2="707.5" y2="282" stroke="#b0b0b0" stroke-width="1"/><line x1="1221.5" y1="49" x2="1221.5" y2="282" stroke="#b0b0b0" stroke-width="1"/><line x1="700" y1="49.5" x2="707" y2="49.5" stroke="#b0b0b0" stroke-width="1"/><line x1="700" y1="70.5" x2="707" y2="70.5" stroke="#b0b0b0" stroke-width="1"/><line x1="700" y1="91.5" x2="707" y2="91.5" stroke="#b0b0b0" stroke-width="1"/><line x1="700" y1="112.5" x2="707" y2="112.5" stroke="#b0b0b0" stroke-width="1"/><line x1="700" y1="133.5" x2="707" y2="133.5" stroke="#b0b0b0" stroke-width="1"/><line x1="700" y1="154.5" x2="707" y2="154.5" stroke="#b0b0b0" stroke-width="1"/><line x1="700" y1="176.5" x2="707" y2="176.5" stroke="#b0b0b0" stroke-width="1"/><line x1="700" y1="197.5" x2="707" y2="197.5" stroke="#b0b0b0" stroke-width="1"/><line x1="700" y1="218.5" x2="707" y2="218.5" stroke="#b0b0b0" stroke-width="1"/><line x1="700" y1="239.5" x2="707" y2="239.5" stroke="#b0b0b0" stroke-width="1"/><line x1="700" y1="260.5" x2="707" y2="260.5" stroke="#b0b0b0" stroke-width="1"/><line x1="700" y1="281.5" x2="707" y2="281.5" stroke="#b0b0b0" stroke-width="1"/><line x1="716" y1="158.5" x2="807" y2="158.5" stroke="#cfcfcf" stroke-width="1" stroke-dasharray="3 3"/><line x1="741" y1="275.5" x2="770" y2="275.5" stroke="#cfcfcf" stroke-width="1" stroke-dasharray="3 3"/><line x1="771" y1="274.5" x2="804" y2="274.5" stroke="#cfcfcf" stroke-width="1" stroke-dasharray="3 3"/><line x1="735" y1="275.5" x2="738" y2="275.5" stroke="#cfcfcf" stroke-width="1"/></g>
<text class="t" x="937.5" y="44" font-size="13" font-weight="bold" fill="#22f022" text-anchor="start" textLength="52" lengthAdjust="spacingAndGlyphs">V(damp)</text>
<text class="t" x="807.5" y="164" font-size="13" font-weight="bold" fill="#22f022" text-anchor="start" textLength="97" lengthAdjust="spacingAndGlyphs">N-channel limit</text>
<text class="t" x="811.5" y="277" font-size="13" font-weight="bold" fill="#22f022" text-anchor="start" textLength="96" lengthAdjust="spacingAndGlyphs">P-channel limit</text>
<polyline points="707.0,275.5 709.5,275.5 709.5,62.0" stroke="#1ec8c8" stroke-width="1" fill="none" stroke-linejoin="round" shape-rendering="crispEdges"/>
<polyline points="710.5,66.0 710.5,160.5 723.5,160.5" stroke="#1ec8c8" stroke-width="1" fill="none" stroke-linejoin="round" shape-rendering="crispEdges"/>
<polyline points="723.5,160.5 725.5,163.0" stroke="#1ec8c8" stroke-width="1" fill="none" stroke-linejoin="round" shape-rendering="crispEdges"/>
<polyline points="725.5,163.0 725.5,275.5 736.5,275.5 736.5,201.0" stroke="#1ec8c8" stroke-width="1" fill="none" stroke-linejoin="round" shape-rendering="crispEdges"/>
<polyline points="736.5,201.0 738.5,170.0 740.0,164.0 741.0,163.0 742.5,165.5 744.0,171.0 746.0,180.0 748.8,191.2 751.6,201.0 755.0,209.3 760.0,214.9 765.5,217.2 771.0,217.5" stroke="#1ec8c8" stroke-width="1" fill="none" stroke-linejoin="round" shape-rendering="crispEdges"/>
<polyline points="771.0,217.5 1110.5,217.5" stroke="#1ec8c8" stroke-width="1" fill="none" stroke-linejoin="round" shape-rendering="crispEdges"/>
<polyline points="771.0,218.5 1110.5,218.5" stroke="#ff1a1a" stroke-width="1" fill="none" stroke-linejoin="round" shape-rendering="crispEdges"/>
<polyline points="1110.5,218.5 1221.0,218.5" stroke="#1ec8c8" stroke-width="1" fill="none" stroke-linejoin="round" shape-rendering="crispEdges"/>
<polyline points="725.5,202.5 725.5,211.0" stroke="#1a1aff" stroke-width="1" fill="none" stroke-linejoin="round" shape-rendering="crispEdges"/>
<polyline points="725.5,211.0 725.5,223.0" stroke="#ff1a1a" stroke-width="1" fill="none" stroke-linejoin="round" shape-rendering="crispEdges"/>
<polyline points="737.5,234.0 737.5,242.0" stroke="#ff1a1a" stroke-width="1" fill="none" stroke-linejoin="round" shape-rendering="crispEdges"/>
<polyline points="737.5,242.0 737.5,245.0" stroke="#1a1aff" stroke-width="1" fill="none" stroke-linejoin="round" shape-rendering="crispEdges"/>
<polyline points="738.5,200.0 738.5,205.0" stroke="#ff1a1a" stroke-width="1" fill="none" stroke-linejoin="round" shape-rendering="crispEdges"/>
<rect x="741.0" y="166" width="1.4" height="2" fill="#ff1a1a"/>
<rect x="742.5" y="169" width="1.4" height="2" fill="#22ff22"/>
<rect x="745.0" y="177" width="1.4" height="2" fill="#ff1a1a"/>
<rect x="747.0" y="185" width="1.4" height="2" fill="#ff1a1a"/>
<rect x="748.5" y="190" width="1.4" height="2" fill="#1a1aff"/>
<rect x="751.5" y="200" width="1.4" height="2" fill="#ff1a1a"/>
<rect x="754.0" y="206" width="1.4" height="2" fill="#1a1aff"/>
<rect x="756.5" y="210" width="1.4" height="2" fill="#ff1a1a"/>
<rect x="761.5" y="214.5" width="1.4" height="2" fill="#1a1aff"/>
<rect x="766.5" y="216.5" width="1.4" height="2" fill="#ff1a1a"/>
<g shape-rendering="crispEdges"><line x1="713" y1="323.5" x2="1221" y2="323.5" stroke="#80837a" stroke-width="1" stroke-dasharray="3 3"/><line x1="713" y1="345.5" x2="1221" y2="345.5" stroke="#80837a" stroke-width="1" stroke-dasharray="3 3"/><line x1="713" y1="366.5" x2="1221" y2="366.5" stroke="#80837a" stroke-width="1" stroke-dasharray="3 3"/><line x1="713" y1="387.5" x2="1221" y2="387.5" stroke="#80837a" stroke-width="1" stroke-dasharray="3 3"/><line x1="713" y1="409.5" x2="1221" y2="409.5" stroke="#80837a" stroke-width="1" stroke-dasharray="3 3"/><line x1="713" y1="430.5" x2="1221" y2="430.5" stroke="#80837a" stroke-width="1" stroke-dasharray="3 3"/><line x1="713" y1="452.5" x2="1221" y2="452.5" stroke="#80837a" stroke-width="1" stroke-dasharray="3 3"/><line x1="713" y1="473.5" x2="1221" y2="473.5" stroke="#80837a" stroke-width="1" stroke-dasharray="3 3"/><line x1="713" y1="494.5" x2="1221" y2="494.5" stroke="#80837a" stroke-width="1" stroke-dasharray="3 3"/><line x1="713" y1="516.5" x2="1221" y2="516.5" stroke="#80837a" stroke-width="1" stroke-dasharray="3 3"/><line x1="758.5" y1="304" x2="758.5" y2="537" stroke="#80837a" stroke-width="1" stroke-dasharray="3 3"/><line x1="810.5" y1="304" x2="810.5" y2="537" stroke="#80837a" stroke-width="1" stroke-dasharray="3 3"/><line x1="861.5" y1="304" x2="861.5" y2="537" stroke="#80837a" stroke-width="1" stroke-dasharray="3 3"/><line x1="913.5" y1="304" x2="913.5" y2="537" stroke="#80837a" stroke-width="1" stroke-dasharray="3 3"/><line x1="964.5" y1="304" x2="964.5" y2="537" stroke="#80837a" stroke-width="1" stroke-dasharray="3 3"/><line x1="1015.5" y1="304" x2="1015.5" y2="537" stroke="#80837a" stroke-width="1" stroke-dasharray="3 3"/><line x1="1067.5" y1="304" x2="1067.5" y2="537" stroke="#80837a" stroke-width="1" stroke-dasharray="3 3"/><line x1="1118.5" y1="304" x2="1118.5" y2="537" stroke="#80837a" stroke-width="1" stroke-dasharray="3 3"/><line x1="1170.5" y1="304" x2="1170.5" y2="537" stroke="#80837a" stroke-width="1" stroke-dasharray="3 3"/><line x1="700" y1="302.5" x2="1222" y2="302.5" stroke="#b0b0b0" stroke-width="1"/><line x1="700" y1="537.5" x2="1222" y2="537.5" stroke="#b0b0b0" stroke-width="1"/><line x1="707.5" y1="302" x2="707.5" y2="538" stroke="#b0b0b0" stroke-width="1"/><line x1="1221.5" y1="302" x2="1221.5" y2="538" stroke="#b0b0b0" stroke-width="1"/><line x1="700" y1="302.5" x2="707" y2="302.5" stroke="#b0b0b0" stroke-width="1"/><line x1="700" y1="323.5" x2="707" y2="323.5" stroke="#b0b0b0" stroke-width="1"/><line x1="700" y1="345.5" x2="707" y2="345.5" stroke="#b0b0b0" stroke-width="1"/><line x1="700" y1="366.5" x2="707" y2="366.5" stroke="#b0b0b0" stroke-width="1"/><line x1="700" y1="387.5" x2="707" y2="387.5" stroke="#b0b0b0" stroke-width="1"/><line x1="700" y1="409.5" x2="707" y2="409.5" stroke="#b0b0b0" stroke-width="1"/><line x1="700" y1="430.5" x2="707" y2="430.5" stroke="#b0b0b0" stroke-width="1"/><line x1="700" y1="452.5" x2="707" y2="452.5" stroke="#b0b0b0" stroke-width="1"/><line x1="700" y1="473.5" x2="707" y2="473.5" stroke="#b0b0b0" stroke-width="1"/><line x1="700" y1="494.5" x2="707" y2="494.5" stroke="#b0b0b0" stroke-width="1"/><line x1="700" y1="516.5" x2="707" y2="516.5" stroke="#b0b0b0" stroke-width="1"/><line x1="700" y1="537.5" x2="707" y2="537.5" stroke="#b0b0b0" stroke-width="1"/></g>
<g shape-rendering="geometricPrecision"><line x1="704" y1="316.9" x2="707" y2="316.9" stroke="#b0b0b0" stroke-width="1"/><line x1="704" y1="313.2" x2="707" y2="313.2" stroke="#b0b0b0" stroke-width="1"/><line x1="704" y1="310.5" x2="707" y2="310.5" stroke="#b0b0b0" stroke-width="1"/><line x1="704" y1="308.4" x2="707" y2="308.4" stroke="#b0b0b0" stroke-width="1"/><line x1="704" y1="306.7" x2="707" y2="306.7" stroke="#b0b0b0" stroke-width="1"/><line x1="704" y1="305.3" x2="707" y2="305.3" stroke="#b0b0b0" stroke-width="1"/><line x1="704" y1="304.1" x2="707" y2="304.1" stroke="#b0b0b0" stroke-width="1"/><line x1="704" y1="303.0" x2="707" y2="303.0" stroke="#b0b0b0" stroke-width="1"/><line x1="704" y1="338.3" x2="707" y2="338.3" stroke="#b0b0b0" stroke-width="1"/><line x1="704" y1="334.5" x2="707" y2="334.5" stroke="#b0b0b0" stroke-width="1"/><line x1="704" y1="331.9" x2="707" y2="331.9" stroke="#b0b0b0" stroke-width="1"/><line x1="704" y1="329.8" x2="707" y2="329.8" stroke="#b0b0b0" stroke-width="1"/><line x1="704" y1="328.1" x2="707" y2="328.1" stroke="#b0b0b0" stroke-width="1"/><line x1="704" y1="326.7" x2="707" y2="326.7" stroke="#b0b0b0" stroke-width="1"/><line x1="704" y1="325.4" x2="707" y2="325.4" stroke="#b0b0b0" stroke-width="1"/><line x1="704" y1="324.3" x2="707" y2="324.3" stroke="#b0b0b0" stroke-width="1"/><line x1="704" y1="359.7" x2="707" y2="359.7" stroke="#b0b0b0" stroke-width="1"/><line x1="704" y1="355.9" x2="707" y2="355.9" stroke="#b0b0b0" stroke-width="1"/><line x1="704" y1="353.2" x2="707" y2="353.2" stroke="#b0b0b0" stroke-width="1"/><line x1="704" y1="351.2" x2="707" y2="351.2" stroke="#b0b0b0" stroke-width="1"/><line x1="704" y1="349.5" x2="707" y2="349.5" stroke="#b0b0b0" stroke-width="1"/><line x1="704" y1="348.0" x2="707" y2="348.0" stroke="#b0b0b0" stroke-width="1"/><line x1="704" y1="346.8" x2="707" y2="346.8" stroke="#b0b0b0" stroke-width="1"/><line x1="704" y1="345.7" x2="707" y2="345.7" stroke="#b0b0b0" stroke-width="1"/><line x1="704" y1="381.0" x2="707" y2="381.0" stroke="#b0b0b0" stroke-width="1"/><line x1="704" y1="377.3" x2="707" y2="377.3" stroke="#b0b0b0" stroke-width="1"/><line x1="704" y1="374.6" x2="707" y2="374.6" stroke="#b0b0b0" stroke-width="1"/><line x1="704" y1="372.5" x2="707" y2="372.5" stroke="#b0b0b0" stroke-width="1"/><line x1="704" y1="370.8" x2="707" y2="370.8" stroke="#b0b0b0" stroke-width="1"/><line x1="704" y1="369.4" x2="707" y2="369.4" stroke="#b0b0b0" stroke-width="1"/><line x1="704" y1="368.2" x2="707" y2="368.2" stroke="#b0b0b0" stroke-width="1"/><line x1="704" y1="367.1" x2="707" y2="367.1" stroke="#b0b0b0" stroke-width="1"/><line x1="704" y1="402.4" x2="707" y2="402.4" stroke="#b0b0b0" stroke-width="1"/><line x1="704" y1="398.6" x2="707" y2="398.6" stroke="#b0b0b0" stroke-width="1"/><line x1="704" y1="396.0" x2="707" y2="396.0" stroke="#b0b0b0" stroke-width="1"/><line x1="704" y1="393.9" x2="707" y2="393.9" stroke="#b0b0b0" stroke-width="1"/><line x1="704" y1="392.2" x2="707" y2="392.2" stroke="#b0b0b0" stroke-width="1"/><line x1="704" y1="390.8" x2="707" y2="390.8" stroke="#b0b0b0" stroke-width="1"/><line x1="704" y1="389.5" x2="707" y2="389.5" stroke="#b0b0b0" stroke-width="1"/><line x1="704" y1="388.4" x2="707" y2="388.4" stroke="#b0b0b0" stroke-width="1"/><line x1="704" y1="423.8" x2="707" y2="423.8" stroke="#b0b0b0" stroke-width="1"/><line x1="704" y1="420.0" x2="707" y2="420.0" stroke="#b0b0b0" stroke-width="1"/><line x1="704" y1="417.3" x2="707" y2="417.3" stroke="#b0b0b0" stroke-width="1"/><line x1="704" y1="415.2" x2="707" y2="415.2" stroke="#b0b0b0" stroke-width="1"/><line x1="704" y1="413.6" x2="707" y2="413.6" stroke="#b0b0b0" stroke-width="1"/><line x1="704" y1="412.1" x2="707" y2="412.1" stroke="#b0b0b0" stroke-width="1"/><line x1="704" y1="410.9" x2="707" y2="410.9" stroke="#b0b0b0" stroke-width="1"/><line x1="704" y1="409.8" x2="707" y2="409.8" stroke="#b0b0b0" stroke-width="1"/><line x1="704" y1="445.1" x2="707" y2="445.1" stroke="#b0b0b0" stroke-width="1"/><line x1="704" y1="441.4" x2="707" y2="441.4" stroke="#b0b0b0" stroke-width="1"/><line x1="704" y1="438.7" x2="707" y2="438.7" stroke="#b0b0b0" stroke-width="1"/><line x1="704" y1="436.6" x2="707" y2="436.6" stroke="#b0b0b0" stroke-width="1"/><line x1="704" y1="434.9" x2="707" y2="434.9" stroke="#b0b0b0" stroke-width="1"/><line x1="704" y1="433.5" x2="707" y2="433.5" stroke="#b0b0b0" stroke-width="1"/><line x1="704" y1="432.3" x2="707" y2="432.3" stroke="#b0b0b0" stroke-width="1"/><line x1="704" y1="431.2" x2="707" y2="431.2" stroke="#b0b0b0" stroke-width="1"/><line x1="704" y1="466.5" x2="707" y2="466.5" stroke="#b0b0b0" stroke-width="1"/><line x1="704" y1="462.7" x2="707" y2="462.7" stroke="#b0b0b0" stroke-width="1"/><line x1="704" y1="460.0" x2="707" y2="460.0" stroke="#b0b0b0" stroke-width="1"/><line x1="704" y1="458.0" x2="707" y2="458.0" stroke="#b0b0b0" stroke-width="1"/><line x1="704" y1="456.3" x2="707" y2="456.3" stroke="#b0b0b0" stroke-width="1"/><line x1="704" y1="454.9" x2="707" y2="454.9" stroke="#b0b0b0" stroke-width="1"/><line x1="704" y1="453.6" x2="707" y2="453.6" stroke="#b0b0b0" stroke-width="1"/><line x1="704" y1="452.5" x2="707" y2="452.5" stroke="#b0b0b0" stroke-width="1"/><line x1="704" y1="487.8" x2="707" y2="487.8" stroke="#b0b0b0" stroke-width="1"/><line x1="704" y1="484.1" x2="707" y2="484.1" stroke="#b0b0b0" stroke-width="1"/><line x1="704" y1="481.4" x2="707" y2="481.4" stroke="#b0b0b0" stroke-width="1"/><line x1="704" y1="479.3" x2="707" y2="479.3" stroke="#b0b0b0" stroke-width="1"/><line x1="704" y1="477.6" x2="707" y2="477.6" stroke="#b0b0b0" stroke-width="1"/><line x1="704" y1="476.2" x2="707" y2="476.2" stroke="#b0b0b0" stroke-width="1"/><line x1="704" y1="475.0" x2="707" y2="475.0" stroke="#b0b0b0" stroke-width="1"/><line x1="704" y1="473.9" x2="707" y2="473.9" stroke="#b0b0b0" stroke-width="1"/><line x1="704" y1="509.2" x2="707" y2="509.2" stroke="#b0b0b0" stroke-width="1"/><line x1="704" y1="505.4" x2="707" y2="505.4" stroke="#b0b0b0" stroke-width="1"/><line x1="704" y1="502.8" x2="707" y2="502.8" stroke="#b0b0b0" stroke-width="1"/><line x1="704" y1="500.7" x2="707" y2="500.7" stroke="#b0b0b0" stroke-width="1"/><line x1="704" y1="499.0" x2="707" y2="499.0" stroke="#b0b0b0" stroke-width="1"/><line x1="704" y1="497.6" x2="707" y2="497.6" stroke="#b0b0b0" stroke-width="1"/><line x1="704" y1="496.3" x2="707" y2="496.3" stroke="#b0b0b0" stroke-width="1"/><line x1="704" y1="495.3" x2="707" y2="495.3" stroke="#b0b0b0" stroke-width="1"/><line x1="704" y1="530.6" x2="707" y2="530.6" stroke="#b0b0b0" stroke-width="1"/><line x1="704" y1="526.8" x2="707" y2="526.8" stroke="#b0b0b0" stroke-width="1"/><line x1="704" y1="524.1" x2="707" y2="524.1" stroke="#b0b0b0" stroke-width="1"/><line x1="704" y1="522.1" x2="707" y2="522.1" stroke="#b0b0b0" stroke-width="1"/><line x1="704" y1="520.4" x2="707" y2="520.4" stroke="#b0b0b0" stroke-width="1"/><line x1="704" y1="518.9" x2="707" y2="518.9" stroke="#b0b0b0" stroke-width="1"/><line x1="704" y1="517.7" x2="707" y2="517.7" stroke="#b0b0b0" stroke-width="1"/><line x1="704" y1="516.6" x2="707" y2="516.6" stroke="#b0b0b0" stroke-width="1"/></g>
<g shape-rendering="crispEdges"><line x1="707.5" y1="537" x2="707.5" y2="545" stroke="#b0b0b0" stroke-width="1"/><line x1="758.5" y1="537" x2="758.5" y2="545" stroke="#b0b0b0" stroke-width="1"/><line x1="810.5" y1="537" x2="810.5" y2="545" stroke="#b0b0b0" stroke-width="1"/><line x1="861.5" y1="537" x2="861.5" y2="545" stroke="#b0b0b0" stroke-width="1"/><line x1="913.5" y1="537" x2="913.5" y2="545" stroke="#b0b0b0" stroke-width="1"/><line x1="964.5" y1="537" x2="964.5" y2="545" stroke="#b0b0b0" stroke-width="1"/><line x1="1015.5" y1="537" x2="1015.5" y2="545" stroke="#b0b0b0" stroke-width="1"/><line x1="1067.5" y1="537" x2="1067.5" y2="545" stroke="#b0b0b0" stroke-width="1"/><line x1="1118.5" y1="537" x2="1118.5" y2="545" stroke="#b0b0b0" stroke-width="1"/><line x1="1170.5" y1="537" x2="1170.5" y2="545" stroke="#b0b0b0" stroke-width="1"/><line x1="1221.5" y1="537" x2="1221.5" y2="545" stroke="#b0b0b0" stroke-width="1"/></g>
<text class="t" x="911.5" y="297" font-size="13" font-weight="bold" fill="#22f022" text-anchor="start" textLength="104" lengthAdjust="spacingAndGlyphs">V(damp)-135u46</text>
<polyline points="707.0,537.0 709.5,537.0 709.5,306.0" stroke="#1ec8c8" stroke-width="1" fill="none" stroke-linejoin="round" shape-rendering="crispEdges"/>
<polyline points="710.5,306.0 710.5,315.5 724.5,315.5 724.5,537.0" stroke="#1ec8c8" stroke-width="1" fill="none" stroke-linejoin="round" shape-rendering="crispEdges"/>
<polyline points="725.5,329.0 725.5,338.0" stroke="#1a1aff" stroke-width="1" fill="none" stroke-linejoin="round" shape-rendering="crispEdges"/>
<polyline points="725.5,338.0 725.5,537.0" stroke="#ff1a1a" stroke-width="1" fill="none" stroke-linejoin="round" shape-rendering="crispEdges"/>
<polyline points="760.8,344.8 765.5,356.5 770.0,366.5 773.8,382.0 776.5,392.0 778.5,400.0 779.3,410.5 779.5,537.0" stroke="#1a1aff" stroke-width="1" fill="none" stroke-linejoin="round" shape-rendering="crispEdges"/>
<polyline points="760.8,344.8 765.7,356.0 770.0,365.7 774.0,381.2 776.8,391.0 778.9,399.4 779.6,409.2 781.0,417.6 781.5,430.0 781.5,537.0" stroke="#ff1a1a" stroke-width="1" fill="none" stroke-linejoin="round" shape-rendering="crispEdges"/>
<polyline points="737.5,537.0 737.5,327.0 738.5,318.2 739.9,316.5 742.7,316.5 744.8,317.9 749.0,322.4 753.1,328.0 757.3,337.0 760.8,344.8" stroke="#1ec8c8" stroke-width="1" fill="none" stroke-linejoin="round" shape-rendering="crispEdges"/>
<polyline points="760.8,344.8 765.7,353.8 771.3,359.4 776.2,361.3 800.0,361.0 860.0,362.2 950.0,363.8 1050.0,365.8 1150.0,367.6 1221.0,369.2" stroke="#1ec8c8" stroke-width="1" fill="none" stroke-linejoin="round" shape-rendering="crispEdges"/>
<polyline points="787.5,537.0 787.5,433.0 788.7,425.2 789.4,418.3 791.5,412.0 796.4,407.0 800.6,405.2 806.0,404.3 827.0,404.3 827.0,405.2 900.0,406.2 1000.0,407.8 1100.0,409.7 1221.0,411.8" stroke="#ff1a1a" stroke-width="1" fill="none" stroke-linejoin="round" shape-rendering="crispEdges"/>
<polyline points="819.5,537.0 819.5,451.0 822.0,450.8 861.0,450.8 861.0,449.2 900.0,449.6 1000.0,450.6 1100.0,452.2 1221.0,454.2" stroke="#1a1aff" stroke-width="1" fill="none" stroke-linejoin="round" shape-rendering="crispEdges"/>
<polyline points="841.5,537.0 841.5,493.0 860.0,493.0 870.0,494.0 950.0,495.0 1050.0,497.6 1150.0,500.2 1221.0,502.4" stroke="#22ff22" stroke-width="1" fill="none" stroke-linejoin="round" shape-rendering="crispEdges"/>
<rect x="739.0" y="322" width="1.4" height="2" fill="#ff1a1a"/>
<rect x="740.0" y="318" width="1.4" height="2" fill="#ff1a1a"/>
<rect x="748.5" y="322.5" width="1.4" height="2" fill="#ff1a1a"/>
<rect x="751.5" y="326" width="1.4" height="2" fill="#1a1aff"/>
<rect x="753.0" y="328" width="1.4" height="2" fill="#22ff22"/>
<rect x="765.5" y="356" width="1.4" height="2" fill="#22ff22"/>
<rect x="770.5" y="366" width="1.4" height="2" fill="#22ff22"/>
<rect x="773.5" y="381" width="1.4" height="2" fill="#1a1aff"/>
<rect x="776.0" y="389" width="1.4" height="2" fill="#22ff22"/>
<rect x="777.5" y="398" width="1.4" height="2" fill="#22ff22"/>
<rect x="778.5" y="408" width="1.4" height="2" fill="#22ff22"/>
<text class="t" x="670.37" y="54" font-size="13.5" fill="#aeaeae" textLength="27.57" lengthAdjust="spacingAndGlyphs">7.2V</text>
<text class="t" x="670.37" y="75" font-size="13.5" fill="#aeaeae" textLength="27.57" lengthAdjust="spacingAndGlyphs">6.3V</text>
<text class="t" x="670.37" y="96" font-size="13.5" fill="#aeaeae" textLength="27.57" lengthAdjust="spacingAndGlyphs">5.4V</text>
<text class="t" x="671.40" y="117" font-size="13.5" fill="#aeaeae" textLength="26.55" lengthAdjust="spacingAndGlyphs">4.5V</text>
<text class="t" x="670.37" y="138" font-size="13.5" fill="#aeaeae" textLength="27.57" lengthAdjust="spacingAndGlyphs">3.6V</text>
<text class="t" x="670.37" y="159" font-size="13.5" fill="#aeaeae" textLength="27.57" lengthAdjust="spacingAndGlyphs">2.7V</text>
<text class="t" x="670.37" y="181" font-size="13.5" fill="#aeaeae" textLength="27.57" lengthAdjust="spacingAndGlyphs">1.8V</text>
<text class="t" x="671.40" y="202" font-size="13.5" fill="#aeaeae" textLength="26.55" lengthAdjust="spacingAndGlyphs">0.9V</text>
<text class="t" x="671.40" y="223" font-size="13.5" fill="#aeaeae" textLength="26.55" lengthAdjust="spacingAndGlyphs">0.0V</text>
<text class="t" x="665.44" y="244" font-size="13.5" fill="#aeaeae" textLength="32.84" lengthAdjust="spacingAndGlyphs">-0.9V</text>
<text class="t" x="665.44" y="265" font-size="13.5" fill="#aeaeae" textLength="32.84" lengthAdjust="spacingAndGlyphs">-1.8V</text>
<text class="t" x="665.44" y="286" font-size="13.5" fill="#aeaeae" textLength="32.84" lengthAdjust="spacingAndGlyphs">-2.7V</text>
<text class="t" x="682.91" y="307" font-size="13.5" fill="#aeaeae" textLength="15.80" lengthAdjust="spacingAndGlyphs">10</text>
<text class="t" x="692.40" y="328" font-size="13.5" fill="#aeaeae" textLength="4.34" lengthAdjust="spacingAndGlyphs">1</text>
<text class="t" x="679.40" y="350" font-size="13.5" fill="#aeaeae" textLength="17.27" lengthAdjust="spacingAndGlyphs">0.1</text>
<text class="t" x="671.60" y="371" font-size="13.5" fill="#aeaeae" textLength="25.31" lengthAdjust="spacingAndGlyphs">0.01</text>
<text class="t" x="663.60" y="392" font-size="13.5" fill="#aeaeae" textLength="33.56" lengthAdjust="spacingAndGlyphs">0.001</text>
<text class="t" x="655.90" y="414" font-size="13.5" fill="#aeaeae" textLength="41.50" lengthAdjust="spacingAndGlyphs">0.0001</text>
<text class="t" x="655.23" y="435" font-size="13.5" fill="#aeaeae" textLength="43.49" lengthAdjust="spacingAndGlyphs">1e-005</text>
<text class="t" x="655.23" y="457" font-size="13.5" fill="#aeaeae" textLength="43.49" lengthAdjust="spacingAndGlyphs">1e-006</text>
<text class="t" x="655.23" y="478" font-size="13.5" fill="#aeaeae" textLength="43.49" lengthAdjust="spacingAndGlyphs">1e-007</text>
<text class="t" x="655.23" y="499" font-size="13.5" fill="#aeaeae" textLength="43.49" lengthAdjust="spacingAndGlyphs">1e-008</text>
<text class="t" x="655.23" y="521" font-size="13.5" fill="#aeaeae" textLength="43.49" lengthAdjust="spacingAndGlyphs">1e-009</text>
<text class="t" x="655.23" y="542" font-size="13.5" fill="#aeaeae" textLength="43.49" lengthAdjust="spacingAndGlyphs">1e-010</text>
<text class="t" x="695.80" y="558" font-size="13.5" fill="#aeaeae" textLength="22.65" lengthAdjust="spacingAndGlyphs">0µs</text>
<text class="t" x="745.68" y="558" font-size="13.5" fill="#aeaeae" textLength="23.78" lengthAdjust="spacingAndGlyphs">5µs</text>
<text class="t" x="793.73" y="558" font-size="13.5" fill="#aeaeae" textLength="31.93" lengthAdjust="spacingAndGlyphs">10µs</text>
<text class="t" x="844.73" y="558" font-size="13.5" fill="#aeaeae" textLength="31.93" lengthAdjust="spacingAndGlyphs">15µs</text>
<text class="t" x="896.73" y="558" font-size="13.5" fill="#aeaeae" textLength="31.93" lengthAdjust="spacingAndGlyphs">20µs</text>
<text class="t" x="947.73" y="558" font-size="13.5" fill="#aeaeae" textLength="31.93" lengthAdjust="spacingAndGlyphs">25µs</text>
<text class="t" x="998.73" y="558" font-size="13.5" fill="#aeaeae" textLength="31.93" lengthAdjust="spacingAndGlyphs">30µs</text>
<text class="t" x="1050.73" y="558" font-size="13.5" fill="#aeaeae" textLength="31.93" lengthAdjust="spacingAndGlyphs">35µs</text>
<text class="t" x="1102.85" y="558" font-size="13.5" fill="#aeaeae" textLength="30.79" lengthAdjust="spacingAndGlyphs">40µs</text>
<text class="t" x="1154.85" y="558" font-size="13.5" fill="#aeaeae" textLength="30.79" lengthAdjust="spacingAndGlyphs">45µs</text>
<text class="t" x="1204.73" y="558" font-size="13.5" fill="#aeaeae" textLength="31.93" lengthAdjust="spacingAndGlyphs">50µs</text>
</g>
</svg>
</body></html>
